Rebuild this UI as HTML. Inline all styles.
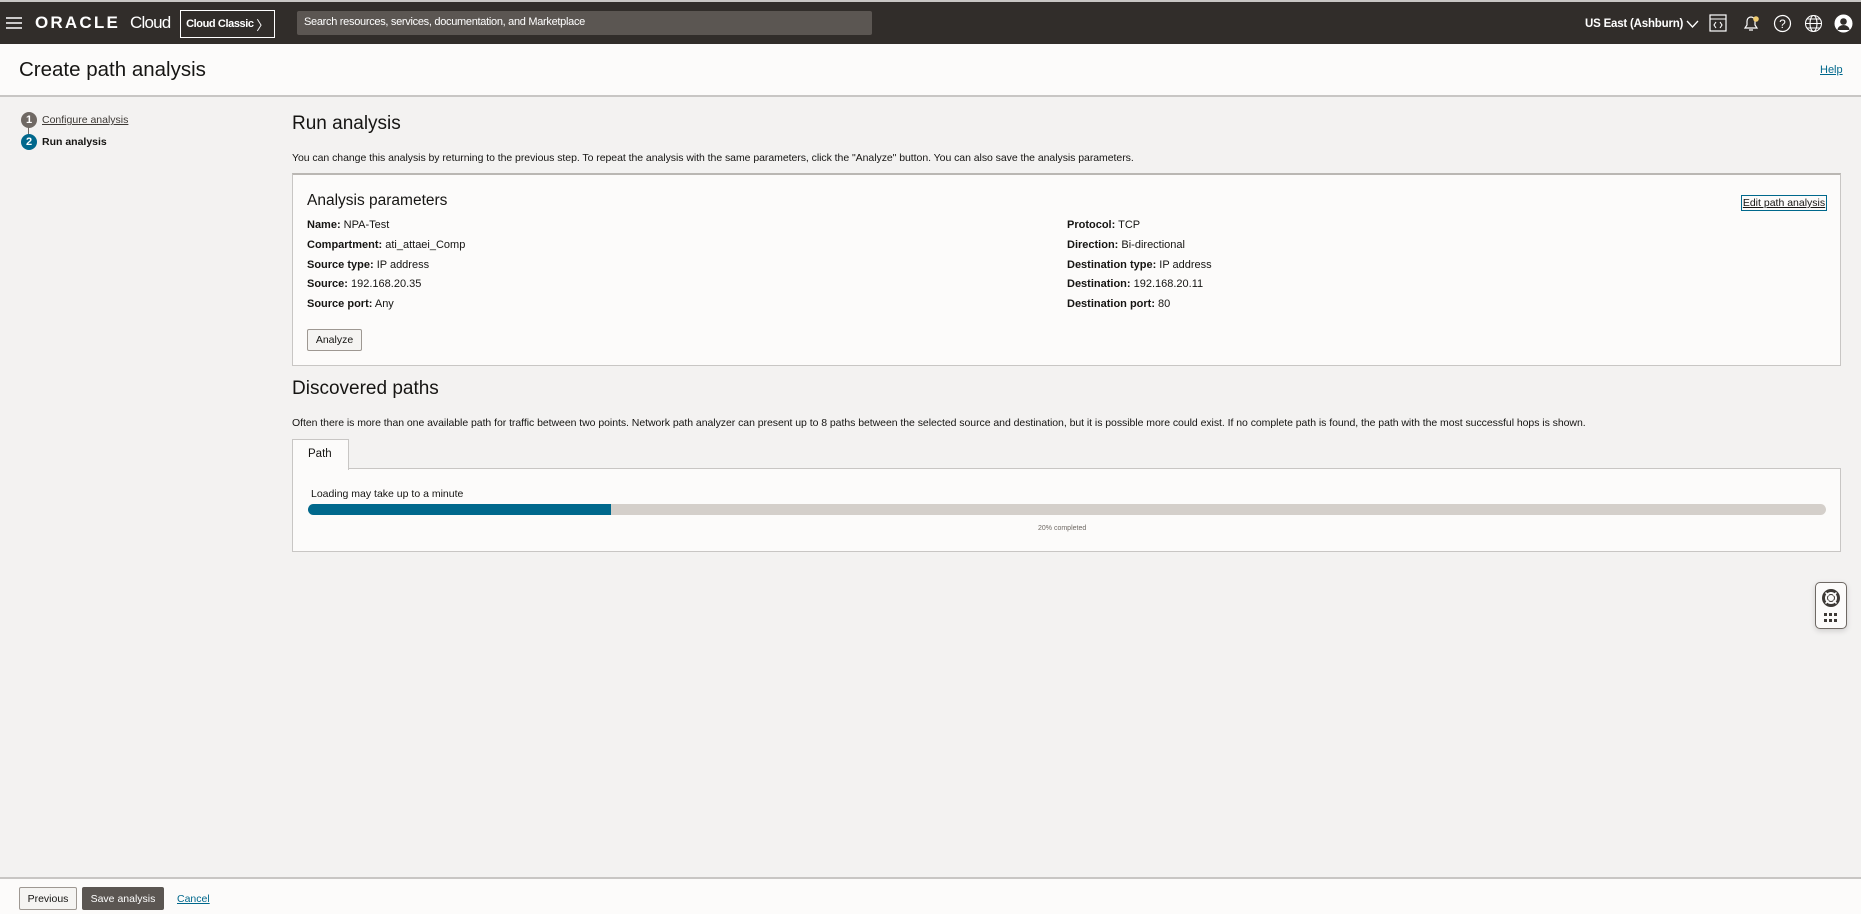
<!DOCTYPE html>
<html><head><meta charset="utf-8"><style>
*{box-sizing:border-box;margin:0;padding:0}
body{width:1861px;height:914px;overflow:hidden;background:#f3f2f1;font-family:"Liberation Sans",sans-serif;color:#161513;position:relative}
.a{position:absolute;white-space:nowrap}
.hdr{position:absolute;left:0;top:0;width:1861px;height:44px;background:#312d2a;border-top:2px solid #c8c6c4}
.tb{position:absolute;left:0;top:44px;width:1861px;height:53px;background:#fcfbfa;border-bottom:2px solid #c8c6c4}
.p{font-size:11px;line-height:14px}
.p b{font-weight:bold}
.card{position:absolute;left:292px;top:173px;width:1549px;height:193px;background:#fcfbfa;border:1px solid #c8c6c4;border-top:2px solid #bab7b3}
.btn{position:absolute;border:1px solid #9e9892;border-radius:2px;background:#f5f4f2;font-size:10.5px;display:flex;align-items:center;justify-content:center}
.foot{position:absolute;left:0;top:877px;width:1861px;height:37px;background:#fcfbfa;border-top:2px solid #c8c6c4}
</style></head><body>
<div class="hdr">
 <svg class="a" style="left:6px;top:14px" width="16" height="14"><path d="M0 2h16M0 7h16M0 12h16" stroke="#fff" stroke-width="1.6"/></svg>
 <div class="a" style="left:35px;top:11px;color:#fff;font-size:17px;font-weight:bold;letter-spacing:2.2px">ORACLE</div>
 <div class="a" style="left:130px;top:11px;color:#fff;font-size:17px;letter-spacing:-0.8px">Cloud</div>
 <div class="a" style="left:180px;top:8px;width:95px;height:28px;border:1px solid #fff;color:#fff;font-size:11px;font-weight:bold;display:flex;align-items:center;justify-content:center;letter-spacing:-0.4px">Cloud Classic&nbsp;<span style="font-weight:normal;font-size:13px">〉</span></div>
 <div class="a" style="left:297px;top:9px;width:575px;height:24px;background:#5b5652;border-radius:2px;color:#fff;font-size:11px;padding:5px 7px;letter-spacing:-0.3px">Search resources, services, documentation, and Marketplace</div>
 <div class="a" style="left:1585px;top:16px;color:#fff;font-size:11.5px;font-weight:bold;letter-spacing:-0.2px">US East (Ashburn)</div>
 <svg class="a" style="left:1686px;top:18px" width="13" height="9"><path d="M1 1l5.5 6 5.5-6" fill="none" stroke="#fff" stroke-width="1.3"/></svg>
 <svg class="a" style="left:1709px;top:12px" width="18" height="18"><rect x="1" y="1" width="16" height="16" fill="none" stroke="#fff" stroke-width="1.2"/><path d="M1 5h16M7 8l-2 3 2 3M11 8l2 3-2 3" fill="none" stroke="#fff" stroke-width="1.1"/></svg>
 <svg class="a" style="left:1741px;top:11px" width="20" height="20"><path d="M4 15h12l-2-3V8a4 4 0 0 0-8 0v4zM8 17h4" fill="none" stroke="#fff" stroke-width="1.2"/><circle cx="15" cy="6" r="2.8" fill="#f0cc71"/></svg>
 <svg class="a" style="left:1773px;top:12px" width="19" height="19"><circle cx="9.5" cy="9.5" r="8" fill="none" stroke="#fff" stroke-width="1.2"/><text x="9.5" y="14" fill="#fff" font-size="12" text-anchor="middle" font-family="Liberation Sans">?</text></svg>
 <svg class="a" style="left:1804px;top:12px" width="19" height="19"><g fill="none" stroke="#fff" stroke-width="1.1"><circle cx="9.5" cy="9.5" r="8"/><ellipse cx="9.5" cy="9.5" rx="3.5" ry="8"/><path d="M1.5 9.5h16M3 5h13M3 14h13"/></g></svg>
 <svg class="a" style="left:1834px;top:12px" width="19" height="19"><circle cx="9.5" cy="9.5" r="9" fill="#fff"/><circle cx="9.5" cy="7.5" r="3.3" fill="#312d2a"/><path d="M3.5 16a6 5 0 0 1 12 0" fill="#312d2a"/></svg>
</div>
<div class="tb">
 <div class="a" style="left:19px;top:14px;font-size:20.5px;color:#161513">Create path analysis</div>
 <div class="a" style="left:1820px;top:20px;font-size:11px;color:#00688c;text-decoration:underline">Help</div>
</div>
<div class="a" style="left:28px;top:120px;width:1px;height:22px;background:#6f6964"></div>
<div class="a" style="left:21px;top:112px;width:16px;height:16px;border-radius:50%;background:#6f6964;color:#fff;font-size:11px;font-weight:bold;text-align:center;line-height:16px">1</div>
<div class="a" style="left:21px;top:134px;width:16px;height:16px;border-radius:50%;background:#00688c;color:#fff;font-size:11px;font-weight:bold;text-align:center;line-height:16px">2</div>
<div class="a p" style="left:42px;top:113px;font-size:10.5px;color:#3d3935;text-decoration:underline">Configure analysis</div>
<div class="a p" style="left:42px;top:135px;font-size:10.5px;font-weight:bold">Run analysis</div>
<div class="a" style="left:292px;top:113px;font-size:19px">Run analysis</div>
<div class="a p" style="left:292px;top:151px;font-size:10.5px;letter-spacing:-0.05px">You can change this analysis by returning to the previous step. To repeat the analysis with the same parameters, click the "Analyze" button. You can also save the analysis parameters.</div>
<div class="card">
 <div class="a" style="left:14px;top:17px;font-size:15.5px">Analysis parameters</div>
 <div class="a" style="left:1448px;top:20px;width:86px;height:16px;border:1px solid #00688c;font-size:10.5px;text-align:center;line-height:14px;text-decoration:underline">Edit path analysis</div>
 <div class="a p" style="left:14px;top:43px"><b>Name:</b> NPA-Test</div>
 <div class="a p" style="left:14px;top:63px"><b>Compartment:</b> ati_attaei_Comp</div>
 <div class="a p" style="left:14px;top:83px"><b>Source type:</b> IP address</div>
 <div class="a p" style="left:14px;top:102px"><b>Source:</b> 192.168.20.35</div>
 <div class="a p" style="left:14px;top:122px"><b>Source port:</b> Any</div>
 <div class="a p" style="left:774px;top:43px"><b>Protocol:</b> TCP</div>
 <div class="a p" style="left:774px;top:63px"><b>Direction:</b> Bi-directional</div>
 <div class="a p" style="left:774px;top:83px"><b>Destination type:</b> IP address</div>
 <div class="a p" style="left:774px;top:102px"><b>Destination:</b> 192.168.20.11</div>
 <div class="a p" style="left:774px;top:122px"><b>Destination port:</b> 80</div>
 <div class="btn" style="left:14px;top:154px;width:55px;height:22px">Analyze</div>
</div>
<div class="a" style="left:292px;top:378px;font-size:19px">Discovered paths</div>
<div class="a p" style="left:292px;top:416px;font-size:10.5px;letter-spacing:-0.05px">Often there is more than one available path for traffic between two points. Network path analyzer can present up to 8 paths between the selected source and destination, but it is possible more could exist. If no complete path is found, the path with the most successful hops is shown.</div>
<div class="a" style="left:292px;top:468px;width:1549px;height:84px;background:#fcfbfa;border:1px solid #c8c6c4"></div>
<div class="a" style="left:292px;top:439px;width:57px;height:31px;background:#fcfbfa;border:1px solid #c8c6c4;border-bottom:none;font-size:11.5px;padding:8px 0 0 15px">Path</div>
<div class="a p" style="left:311px;top:487px;font-size:10.5px">Loading may take up to a minute</div>
<div class="a" style="left:308px;top:504px;width:1518px;height:11px;background:#d4cfca;border-radius:6px;overflow:hidden"><div style="width:303px;height:11px;background:#00688c"></div></div>
<div class="a" style="left:1038px;top:525px;font-size:7px;color:#6f6964">20% completed</div>
<div class="a" style="left:1815px;top:582px;width:32px;height:47px;background:#fcfbfa;border:1px solid #6f6964;border-radius:5px;box-shadow:0 2px 6px rgba(0,0,0,.15)">
 <svg class="a" style="left:5px;top:5px" width="20" height="20"><circle cx="10" cy="10" r="7.5" fill="none" stroke="#3d3935" stroke-width="3"/><circle cx="10" cy="10" r="3.5" fill="#fcfbfa" stroke="#3d3935" stroke-width="1"/><path d="M4.5 4.5l3 3M15.5 4.5l-3 3M4.5 15.5l3-3M15.5 15.5l-3-3" stroke="#fcfbfa" stroke-width="1.5"/></svg>
 <svg class="a" style="left:8px;top:30px" width="14" height="10"><g fill="#3d3935"><rect x="0" y="0" width="3" height="3"/><rect x="5" y="0" width="3" height="3"/><rect x="10" y="0" width="3" height="3"/><rect x="0" y="6" width="3" height="3"/><rect x="5" y="6" width="3" height="3"/><rect x="10" y="6" width="3" height="3"/></g></svg>
</div>
<div class="foot">
 <div class="btn" style="left:19px;top:8px;width:58px;height:23px">Previous</div>
 <div class="btn" style="left:82px;top:8px;width:82px;height:23px;background:#5b5652;border-color:#5b5652;color:#fff">Save analysis</div>
 <div class="a p" style="left:177px;top:13px;font-size:10.5px;color:#00688c;text-decoration:underline">Cancel</div>
</div>
</body></html>
